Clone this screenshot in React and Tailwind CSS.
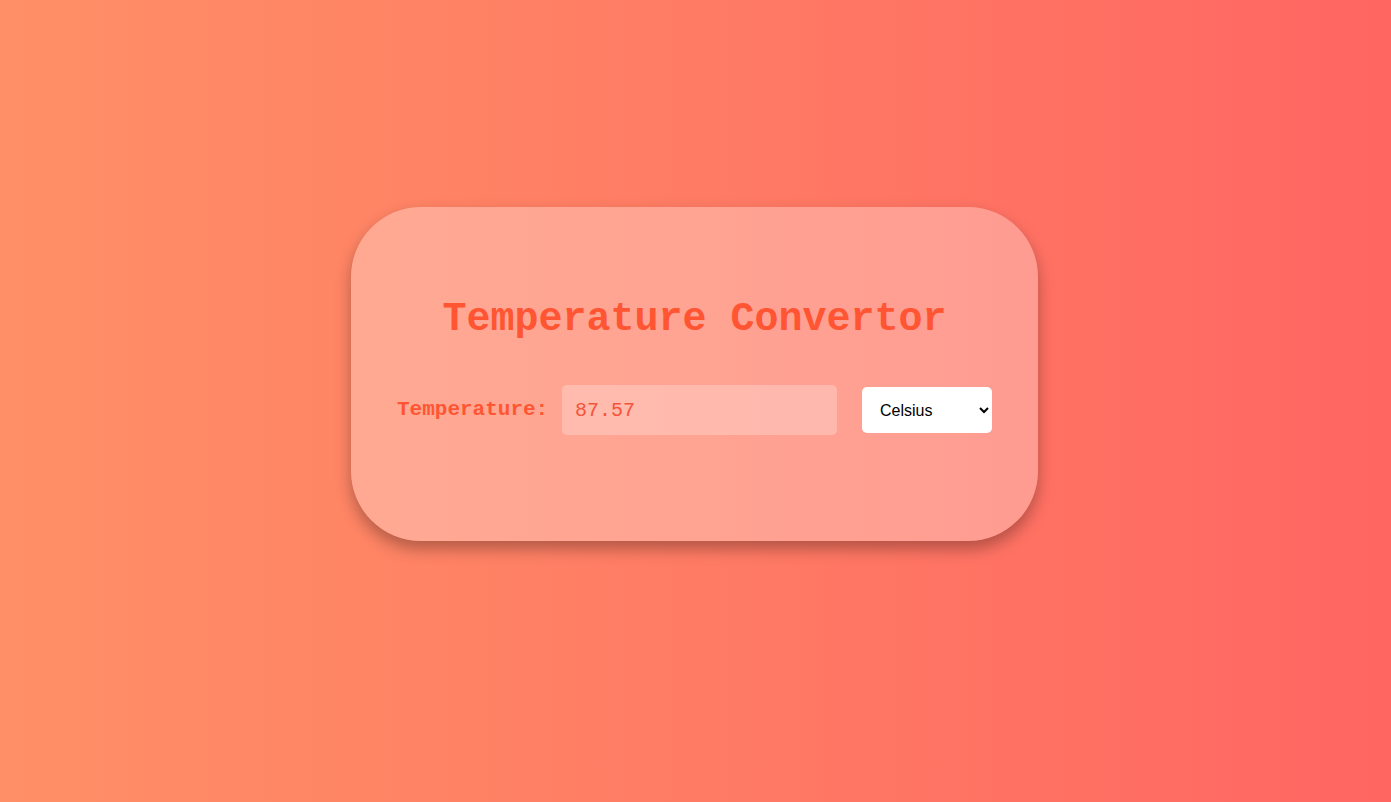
import { useState } from 'react';

export default function App() {
  const [temp, setTemp] = useState('87.57');
  const [unit, setUnit] = useState('Celsius');

  return (
    <div className="min-h-screen w-full bg-gradient-to-r from-[#ff8f66] to-[#ff6662] flex justify-center pt-[207px] pr-[2px]">
      <div className="w-[687px] h-[334px] rounded-[70px] bg-white/30 shadow-[0_8px_16px_rgba(0,0,0,0.3)] flex flex-col items-center pt-[90px]">
        <h1 className="font-['Courier_New','Liberation_Mono',monospace] font-bold text-[40px] leading-[45px] text-[#ff5533]">
          Temperature Convertor
        </h1>
        <div className="mt-[43px] flex items-center">
          <label className="font-['Courier_New','Liberation_Mono',monospace] font-bold text-[21px] text-[#ff5533] w-[152px] whitespace-nowrap">
            Temperature:
          </label>
          <input
            value={temp}
            onChange={e => setTemp(e.target.value)}
            className="ml-[13px] w-[275px] h-[50px] rounded-[5px] bg-white/25 px-[13px] font-['Courier_New','Liberation_Mono',monospace] text-[20px] text-[#f4553a] outline-none"
          />
          <select
            value={unit}
            onChange={e => setUnit(e.target.value)}
            className="ml-[25px] w-[130px] h-[46px] rounded-[5px] bg-white pl-[14px] font-['Liberation_Sans',Arial,sans-serif] text-[16px] text-black outline-none"
          >
            <option>Celsius</option>
            <option>Fahrenheit</option>
            <option>Kelvin</option>
          </select>
        </div>
      </div>
    </div>
  );
}
